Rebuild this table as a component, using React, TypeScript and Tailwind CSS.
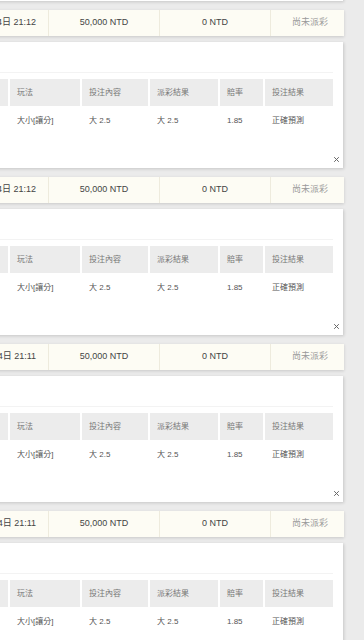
const rows = [
  { time: '2023年05月14日 21:12', bet: '50,000 NTD', win: '0 NTD', status: '尚未派彩' },
  { time: '2023年05月14日 21:12', bet: '50,000 NTD', win: '0 NTD', status: '尚未派彩' },
  { time: '2023年05月14日 21:11', bet: '50,000 NTD', win: '0 NTD', status: '尚未派彩' },
  { time: '2023年05月14日 21:11', bet: '50,000 NTD', win: '0 NTD', status: '尚未派彩' },
];

const headers = ['玩法', '投注內容', '派彩結果', '賠率', '投注結果'];
const detail = ['大小[讓分]', '大 2.5', '大 2.5', '1.85', '正確預測'];
const widths = ['w-[70px]', 'w-[66px]', 'w-[68px]', 'w-[43px]', 'w-[68px]'];

function CloseIcon() {
  return (
    <svg width="7" height="7" viewBox="0 0 7 7" className="text-[#666]">
      <path d="M1.2 1.2L5.8 5.8M5.8 1.2L1.2 5.8" stroke="currentColor" strokeWidth="1" />
    </svg>
  );
}

function DetailPanel() {
  return (
    <div className="relative h-[126px] w-[363px] bg-white pl-[10px] pr-[10px] shadow-[1px_1px_3px_rgba(0,0,0,0.16)]">
      <div className="h-[31px] border-b border-[#f3f3f3]" />
      <div className="mt-[6px] flex h-[27px] gap-[2px] text-[8px] text-[#777]">
        <div className="w-[18px] bg-[#ececec]" />
        {headers.map((h, i) => (
          <div key={h} className={`${widths[i]} flex items-center bg-[#ececec] pl-[7px]`}>
            {h}
          </div>
        ))}
      </div>
      <div className="flex h-[30px] gap-[2px] text-[8px] text-[#555]">
        <div className="w-[18px]" />
        {detail.map((d, i) => (
          <div key={i} className={`${widths[i]} flex items-center pl-[7px]`}>
            {d}
          </div>
        ))}
      </div>
      <button className="absolute right-[3px] top-[114px] flex h-[7px] w-[7px] items-center justify-center">
        <CloseIcon />
      </button>
    </div>
  );
}

function SummaryRow({ time, bet, win, status }: (typeof rows)[number]) {
  return (
    <div className="flex h-[26px] w-[364px] bg-[#fdfcf4] text-[9px] text-[#444] shadow-[0_1px_3px_rgba(0,0,0,0.15)]">
      <div className="flex w-[69px] items-center justify-end overflow-hidden whitespace-nowrap border-r border-[#eeebdd] pr-[12px]">
        {time}
      </div>
      <div className="flex w-[111px] items-center justify-center border-r border-[#eeebdd]">{bet}</div>
      <div className="flex w-[111px] items-center justify-center border-r border-[#eeebdd]">{win}</div>
      <div className="flex flex-1 items-center justify-center pl-[5px] text-[#999]">{status}</div>
    </div>
  );
}

export default function App() {
  return (
    <div
      className="h-[640px] w-[364px] overflow-hidden bg-[#ebebeb]"
      style={{ fontFamily: '"Liberation Sans", "Noto Sans CJK TC", sans-serif' }}
    >
      <div className="-ml-[20px] -mt-[125px] flex flex-col">
        <DetailPanel />
        {rows.map((r, i) => (
          <div key={i} className="flex flex-col">
            <div className="mt-[9px]">
              <SummaryRow {...r} />
            </div>
            <div className="mt-[6px]">
              <DetailPanel />
            </div>
          </div>
        ))}
      </div>
    </div>
  );
}
